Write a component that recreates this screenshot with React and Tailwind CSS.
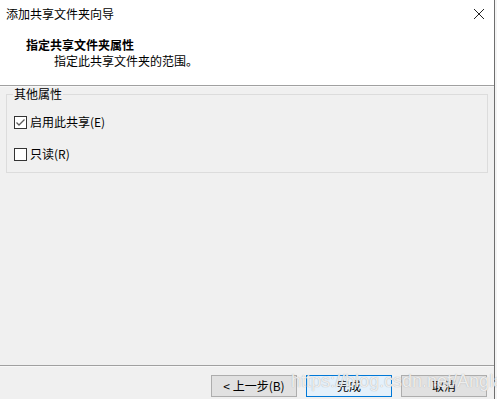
const font = { fontFamily: '"Noto Sans CJK SC", "Noto Sans", sans-serif' };

const CheckBox = ({ checked, label }) => (
  <div className="flex items-center h-[20px]">
    <span className="w-[13px] h-[13px] border border-[#333333] bg-white flex items-center justify-center">
      {checked && (
        <svg width="11" height="11" viewBox="0 0 11 11">
          <path d="M1.5 5.5 L4 8 L9.5 2.5" fill="none" stroke="#5a5a5a" strokeWidth="1.3" />
        </svg>
      )}
    </span>
    <span className="ml-[3px] text-[12px] leading-[16px] text-black">{label}</span>
  </div>
);

const Button = ({ children, primary }) => (
  <button
    className={
      primary
        ? 'w-[86px] h-[22px] border border-[#0078d7] bg-[#e5f1fb] text-[12px] text-black flex items-center justify-center'
        : 'w-[86px] h-[22px] border border-[#adadad] bg-[#e1e1e1] text-[12px] text-black flex items-center justify-center'
    }
  >
    {children}
  </button>
);

export default function App() {
  return (
    <div className="w-[497px] h-[399px] flex bg-white overflow-hidden" style={font}>
      <div className="w-[494px] h-full flex flex-col relative">
        {/* title + header */}
        <div className="bg-white h-[85px] flex flex-col">
          <div className="h-[28px] flex items-center justify-between pl-[6px] pr-[9px]">
            <span className="text-[12px] text-black leading-[16px]">添加共享文件夹向导</span>
            <svg width="12" height="12" viewBox="0 0 12 12">
              <path d="M1 1 L11 11 M11 1 L1 11" stroke="#222" strokeWidth="1" fill="none" />
            </svg>
          </div>
          <div className="mt-[9px] pl-[26px] text-[12px] leading-[16px] font-bold text-black">
            指定共享文件夹属性
          </div>
          <div className="pl-[54px] text-[12px] leading-[16px] text-black">指定此共享文件夹的范围。</div>
        </div>
        <div className="h-px bg-[#a0a0a0]" />
        <div className="h-px bg-[#f8f8f8]" />

        {/* body */}
        <div className="flex-1 bg-[#f0f0f0] px-[6px]">
          <fieldset className="w-[482px] border border-[#dcdcdc] pl-[7px] pb-[8px] -mt-px">
            <legend className="-ml-[1px] px-[1px] text-[12px] leading-[16px] text-black">其他属性</legend>
            <div className="mt-[10px] flex flex-col gap-[12px]">
              <CheckBox checked label="启用此共享(E)" />
              <CheckBox label="只读(R)" />
            </div>
          </fieldset>
        </div>

        {/* footer */}
        <div className="bg-[#f0f0f0]">
          <div className="h-px bg-[#a0a0a0]" />
          <div className="h-px bg-[#f8f8f8]" />
          <div className="h-[32px] flex justify-end items-start gap-[9px] pr-[7px] pt-[8px]">
            <Button>&lt; 上一步(B)</Button>
            <Button primary>完成</Button>
            <Button>取消</Button>
          </div>
        </div>

        {/* watermark */}
        <div
          className="absolute left-[291px] top-[371px] text-[18px] leading-[20px] whitespace-nowrap text-white/80 [text-shadow:0_0_1px_#9a9a9a] pointer-events-none"
          style={{ fontFamily: '"Liberation Sans", Arial, sans-serif' }}
        >
          https://blog.csdn.net/Angla5
        </div>
      </div>
      <div className="w-px h-full bg-[#6e6e6e]" />
      <div className="w-[2px] h-full bg-[#f4f4f4]" />
    </div>
  );
}
